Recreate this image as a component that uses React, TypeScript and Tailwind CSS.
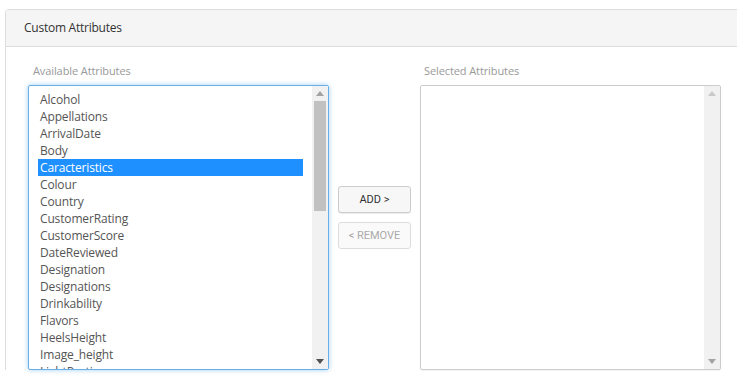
import React from "react";

const items = [
  "Alcohol",
  "Appellations",
  "ArrivalDate",
  "Body",
  "Caracteristics",
  "Colour",
  "Country",
  "CustomerRating",
  "CustomerScore",
  "DateReviewed",
  "Designation",
  "Designations",
  "Drinkability",
  "Flavors",
  "HeelsHeight",
  "Image_height",
  "LightPortion",
];

function Scrollbar({ active }: { active: boolean }) {
  return (
    <div className="flex w-[16px] shrink-0 flex-col bg-[#f1f1f1]">
      <div className="flex h-[15px] items-center justify-center">
        <svg width="8" height="5" viewBox="0 0 8 5">
          <path d="M0 5 L4 0 L8 5 Z" fill={active ? "#a3a3a3" : "#c9c9c9"} />
        </svg>
      </div>
      <div className="flex-1 px-[2px]">
        {active && <div className="h-[110px] w-full bg-[#c1c1c1]" />}
      </div>
      <div className="flex h-[15px] items-center justify-center">
        <svg width="8" height="5" viewBox="0 0 8 5">
          <path d="M0 0 L8 0 L4 5 Z" fill={active ? "#505050" : "#a3a3a3"} />
        </svg>
      </div>
    </div>
  );
}

export default function App() {
  return (
    <div
      className="h-[378px] w-[737px] overflow-hidden bg-white pl-[5px] pt-[9px]"
      style={{ fontFamily: '"Open Sans", sans-serif' }}
    >
      <div className="w-[760px] rounded-tl-[4px] border-l border-t border-[#dddddd]">
        <div className="flex h-[37px] items-center border-b border-[#dddddd] bg-[#f5f5f5] pl-[18px] text-[12px] tracking-[-0.25px] text-[#333333]">
          Custom Attributes
        </div>
        <div className="flex pl-[22px] pt-[16px]">
          <div className="flex w-[301px] flex-col">
            <div className="mb-[6px] pl-[5px] text-[11px] leading-[16px] tracking-[-0.1px] text-[#999999]">
              Available Attributes
            </div>
            <div className="flex h-[285px] overflow-hidden rounded-[2px] border border-[#66afe9] shadow-[0_0_5px_rgba(102,175,233,0.6)]">
              <div className="flex-1 overflow-hidden pl-[9px] pr-[9px] pt-[5px]">
                {items.map((it) => (
                  <div
                    key={it}
                    className={
                      "h-[17px] pl-[2px] text-[12px] leading-[17px] tracking-[-0.15px] " +
                      (it === "Caracteristics" ? "bg-[#1e90ff] text-white" : "text-[#555555]")
                    }
                  >
                    {it}
                  </div>
                ))}
              </div>
              <Scrollbar active={true} />
            </div>
          </div>
          <div className="ml-[9px] flex w-[73px] flex-col pt-[123px]">
            <button
              className="h-[27px] w-full rounded-[3px] border border-[#cccccc] bg-[#f7f7f7] pt-[1px] text-[11px] text-[#333333] shadow-[0_1px_1px_rgba(0,0,0,0.08)]"
              style={{ fontFamily: "Roboto, sans-serif" }}
            >
              ADD &gt;
            </button>
            <button
              className="mt-[9px] h-[27px] w-full rounded-[3px] border border-[#dddddd] bg-[#fafafa] pt-[1px] text-[11px] text-[#aaaaaa]"
              style={{ fontFamily: "Roboto, sans-serif" }}
            >
              &lt; REMOVE
            </button>
          </div>
          <div className="ml-[9px] flex w-[301px] flex-col">
            <div className="mb-[6px] pl-[4px] text-[11px] leading-[16px] tracking-[-0.1px] text-[#999999]">
              Selected Attributes
            </div>
            <div className="flex h-[285px] overflow-hidden rounded-[2px] border border-[#cccccc] shadow-[0_1px_1px_rgba(0,0,0,0.05)]">
              <div className="flex-1" />
              <Scrollbar active={false} />
            </div>
          </div>
        </div>
      </div>
    </div>
  );
}
